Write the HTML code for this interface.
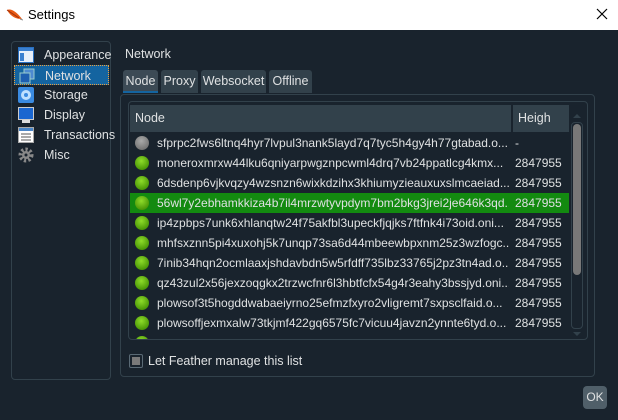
<!DOCTYPE html>
<html><head><meta charset="utf-8"><style>
*{box-sizing:border-box;margin:0;padding:0}
body{width:618px;height:420px;overflow:hidden;background:#19232d;font-family:"Liberation Sans",sans-serif;font-size:12px;color:#dfe1e2;position:relative}
.abs{position:absolute}
#title{left:0;top:0;width:618px;height:30px;background:#fff;color:#000}
#side{left:11px;top:41px;width:100px;height:339px;border:1px solid #32414b;border-radius:4px}
.si{position:absolute;left:2px;width:95px;height:20px;line-height:20px;padding-left:30px;font-size:12.5px}
.ic{position:absolute;left:4px;top:2px;width:16px;height:16px}
#pane{left:120px;top:94px;width:475px;height:283px;border:1px solid #32414b;border-radius:4px}
.tab{position:absolute;top:70px;height:23px;line-height:23px;background:#32414b;border-radius:3px 3px 0 0;text-align:center;font-size:12.5px}
#tbl{left:128px;top:101px;width:460px;height:239px;border:1px solid #32414b;border-radius:4px;overflow:hidden}
.hd{position:absolute;top:3px;height:27px;line-height:27px;background:#32414b;padding-left:5px;font-size:12.5px}
.row{position:absolute;left:1px;width:439px;height:20px;line-height:20px;font-size:12px}
.row .d{position:absolute;left:5px;top:3px;width:14px;height:14px;border-radius:50%;background:radial-gradient(circle at 45% 35%,#8fdc2a,#4d9a08 70%,#3a7a05)}
.row .n{position:absolute;left:27px;width:352px;white-space:nowrap;overflow:hidden}
.row .h{position:absolute;left:385px}
</style></head><body>
<div id="title" class="abs">
<svg class="abs" style="left:6px;top:7px" width="17" height="14"><path d="M1 3 C5 1 11 5 16 12 C10 12 5 10 1 3Z" fill="#e85a14"/><path d="M1 3 L13 11" stroke="#a0300a" stroke-width="1"/><path d="M14 12 L17 13" stroke="#888"/></svg>
<div class="abs" style="left:28px;top:7px;font-size:13px">Settings</div>
<svg class="abs" style="left:596px;top:8px" width="12" height="12"><path d="M1 1L11 11M11 1L1 11" stroke="#000" stroke-width="1.2"/></svg>
</div>
<div id="side" class="abs">
<div class="si" style="top:3px"><svg class="ic" viewBox="0 0 16 16"><rect x="0.5" y="0.5" width="15" height="15" fill="#e8f0fa" stroke="#2a70c0"/><rect x="1" y="1" width="14" height="3" fill="#3a80d0"/><rect x="2" y="6" width="4" height="8" fill="#3a80d0"/></svg>Appearance</div>
<div class="si" style="top:23px;background:#1464a0;border:1px dotted #e8a040"><svg class="ic" viewBox="0 0 16 16"><rect x="5" y="1" width="10" height="10" fill="#4d8ad0" stroke="#9cc"/><rect x="1" y="5" width="10" height="10" fill="#1e5fb0" stroke="#9cc"/></svg>Network</div>
<div class="si" style="top:43px"><svg class="ic" viewBox="0 0 16 16"><rect width="16" height="16" rx="2" fill="#3a8ae0"/><circle cx="8" cy="8" r="5" fill="#bfe0ff"/><circle cx="8" cy="8" r="2" fill="#3a8ae0"/></svg>Storage</div>
<div class="si" style="top:63px"><svg class="ic" viewBox="0 0 16 16"><rect x="0.5" y="0.5" width="15" height="12" fill="#1a66d0" stroke="#ccc"/><rect x="4" y="13" width="8" height="3" fill="#ddd"/></svg>Display</div>
<div class="si" style="top:83px"><svg class="ic" viewBox="0 0 16 16"><rect x="0.5" y="0.5" width="15" height="15" fill="#fff" stroke="#aaa"/><rect x="1" y="1" width="14" height="3" fill="#4a86c8"/><path d="M3 7h10M3 10h10M3 13h10" stroke="#555"/></svg>Transactions</div>
<div class="si" style="top:103px"><svg class="ic" viewBox="0 0 16 16"><circle cx="8" cy="8" r="5.5" fill="none" stroke="#888" stroke-width="4" stroke-dasharray="2.2 2"/><circle cx="8" cy="8" r="4" fill="#888"/><circle cx="8" cy="8" r="1.5" fill="#19232d"/></svg>Misc</div>
</div>
<div class="abs" style="left:125px;top:47px;font-size:12.5px">Network</div>
<div id="pane" class="abs"></div>
<div class="tab" style="left:123px;width:35px;background:#3c4a55;border-bottom:2px solid #1464a0">Node</div>
<div class="tab" style="left:161px;width:37px">Proxy</div>
<div class="tab" style="left:201px;width:65px">Websocket</div>
<div class="tab" style="left:269px;width:43px">Offline</div>
<div id="tbl" class="abs">
<div class="hd" style="left:1px;width:381px">Node</div>
<div class="hd" style="left:384px;width:56px">Heigh</div>
<div class="row" style="top:31px"><span class="d" style="background:radial-gradient(circle at 45% 35%,#aaa,#777 70%,#666)"></span><span class="n">sfprpc2fws6ltnq4hyr7lvpul3nank5layd7q7tyc5h4gy4h77gtabad.o...</span><span class="h">-</span></div>
<div class="row" style="top:51px"><span class="d"></span><span class="n">moneroxmrxw44lku6qniyarpwgznpcwml4drq7vb24ppatlcg4kmx...</span><span class="h">2847955</span></div>
<div class="row" style="top:71px"><span class="d"></span><span class="n">6dsdenp6vjkvqzy4wzsnzn6wixkdzihx3khiumyzieauxuxslmcaeiad....</span><span class="h">2847955</span></div>
<div class="row" style="top:91px;background:#138a10"><span class="d"></span><span class="n">56wl7y2ebhamkkiza4b7il4mrzwtyvpdym7bm2bkg3jrei2je646k3qd...</span><span class="h">2847955</span></div>
<div class="row" style="top:111px"><span class="d"></span><span class="n">ip4zpbps7unk6xhlanqtw24f75akfbl3upeckfjqjks7ftfnk4i73oid.oni...</span><span class="h">2847955</span></div>
<div class="row" style="top:131px"><span class="d"></span><span class="n">mhfsxznn5pi4xuxohj5k7unqp73sa6d44mbeewbpxnm25z3wzfogc...</span><span class="h">2847955</span></div>
<div class="row" style="top:151px"><span class="d"></span><span class="n">7inib34hqn2ocmlaaxjshdavbdn5w5rfdff735lbz33765j2pz3tn4ad.o...</span><span class="h">2847955</span></div>
<div class="row" style="top:171px"><span class="d"></span><span class="n">qz43zul2x56jexzoqgkx2trzwcfnr6l3hbtfcfx54g4r3eahy3bssjyd.oni...</span><span class="h">2847955</span></div>
<div class="row" style="top:191px"><span class="d"></span><span class="n">plowsof3t5hogddwabaeiyrno25efmzfxyro2vligremt7sxpsclfaid.o...</span><span class="h">2847955</span></div>
<div class="row" style="top:211px"><span class="d"></span><span class="n">plowsoffjexmxalw73tkjmf422gq6575fc7vicuu4javzn2ynnte6tyd.o...</span><span class="h">2847955</span></div>
<div class="row" style="top:231px"><span class="d"></span></div>
<div class="abs" style="left:442px;top:20px;width:12px;height:207px;border:1px solid #32414b;border-radius:4px"></div>
<div class="abs" style="left:444px;top:22px;width:8px;height:151px;background:#787878;border-radius:4px"></div>
<svg class="abs" style="left:442px;top:10px" width="12" height="8"><path d="M2 6L6 2L10 6Z" fill="#32414b"/></svg>
<svg class="abs" style="left:442px;top:228px" width="12" height="8"><path d="M2 2L6 6L10 2Z" fill="#32414b"/></svg>
</div>
<div class="abs" style="left:129px;top:354px;width:14px;height:14px;border:1px solid #5a6a75;border-radius:2px"><div style="margin:2px;width:8px;height:8px;background:#7a7a7a"></div></div>
<div class="abs" style="left:148px;top:354px;font-size:12.5px">Let Feather manage this list</div>
<div class="abs" style="left:583px;top:386px;width:24px;height:23px;background:#505f69;border-radius:4px;line-height:23px;text-align:center;font-size:12px">OK</div>
</body></html>
